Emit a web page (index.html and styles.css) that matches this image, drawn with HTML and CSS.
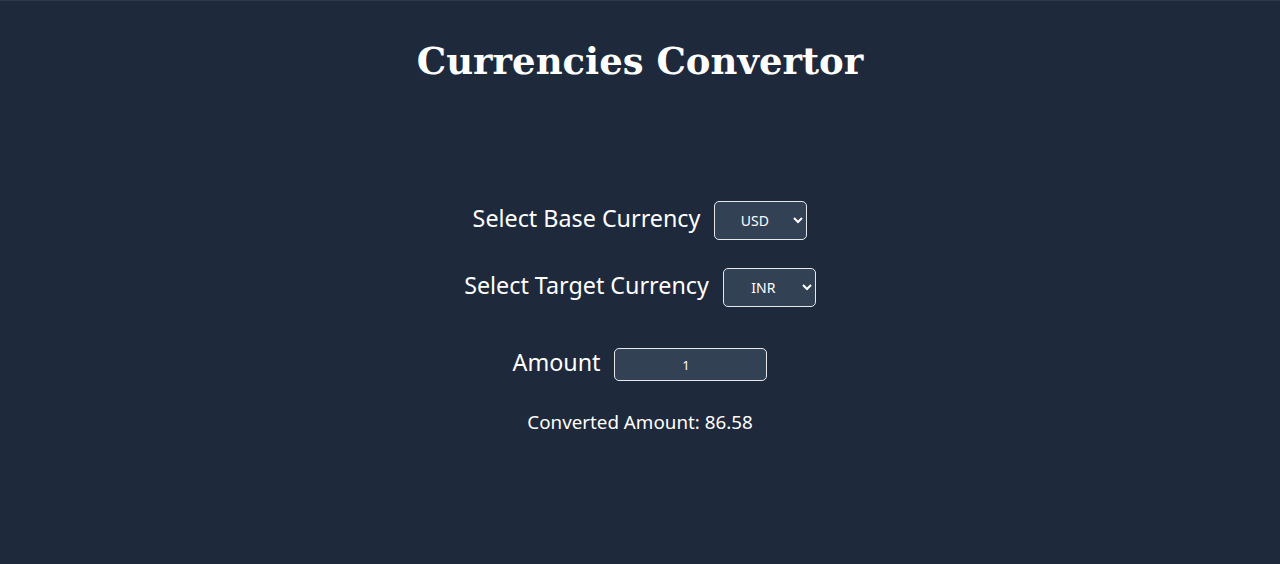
FILE: index.html
```html
<!DOCTYPE html>
<html lang="en">
<head>
<meta charset="utf-8">
<title>Currencies Convertor</title>
<link rel="stylesheet" href="styles.css">
</head>
<body>
<div class="app">
  <h1 class="title">Currencies Convertor</h1>
  <div class="form">
    <div class="row">
      <label class="label" for="base">Select Base Currency</label>
      <select class="select" id="base">
        <option>USD</option>
        <option>INR</option>
        <option>EUR</option>
      </select>
    </div>
    <div class="row">
      <label class="label" for="target">Select Target Currency</label>
      <select class="select" id="target">
        <option>INR</option>
        <option>USD</option>
        <option>EUR</option>
      </select>
    </div>
    <div class="row amount-row">
      <label class="label" for="amount">Amount</label>
      <input class="input" id="amount" type="number" value="1">
    </div>
    <p class="result">Converted Amount: 86.58</p>
  </div>
</div>
</body>
</html>
```

FILE: styles.css
```css
html, body {
  margin: 0;
  padding: 0;
  background: #1e293b;
  height: 100%;
}
body {
  border-top: 1px solid #2b3a4e;
  box-sizing: border-box;
  color: #ffffff;
  font-family: "Noto Sans", "Open Sans", sans-serif;
}
.app {
  display: flex;
  flex-direction: column;
  align-items: center;
}
.title {
  font-family: "DejaVu Serif", "Liberation Serif", serif;
  font-weight: bold;
  font-size: 37px;
  margin: 36px 0 0;
  line-height: 48px;
}
.form {
  display: flex;
  flex-direction: column;
  align-items: center;
  margin-top: 116px;
}
.row {
  display: flex;
  align-items: center;
  gap: 14px;
  margin-bottom: 28px;
}
.label {
  font-size: 23.3px;
  line-height: 32px;
  position: relative;
  top: -3px;
}
.select {
  width: 93px;
  height: 39px;
  background: #334155;
  color: #ffffff;
  border: 1.5px solid #e5e7eb;
  border-radius: 5px;
  font-family: "Noto Sans", sans-serif;
  font-size: 14px;
  text-align: center;
  padding: 0 6px;
}
.amount-row {
  margin-top: 13px;
  margin-bottom: 0;
}
.input {
  width: 153px;
  height: 33px;
  box-sizing: border-box;
  background: #334155;
  color: #ffffff;
  border: 1.5px solid #e5e7eb;
  border-radius: 5px;
  font-family: "Noto Sans", sans-serif;
  font-size: 13px;
  text-align: center;
  padding: 0 12px 0 2px;
  -moz-appearance: textfield;
}
.input::-webkit-outer-spin-button,
.input::-webkit-inner-spin-button {
  -webkit-appearance: none;
  margin: 0;
}
.result {
  font-size: 18.8px;
  margin: 27px 0 0;
  line-height: 28px;
}
```
